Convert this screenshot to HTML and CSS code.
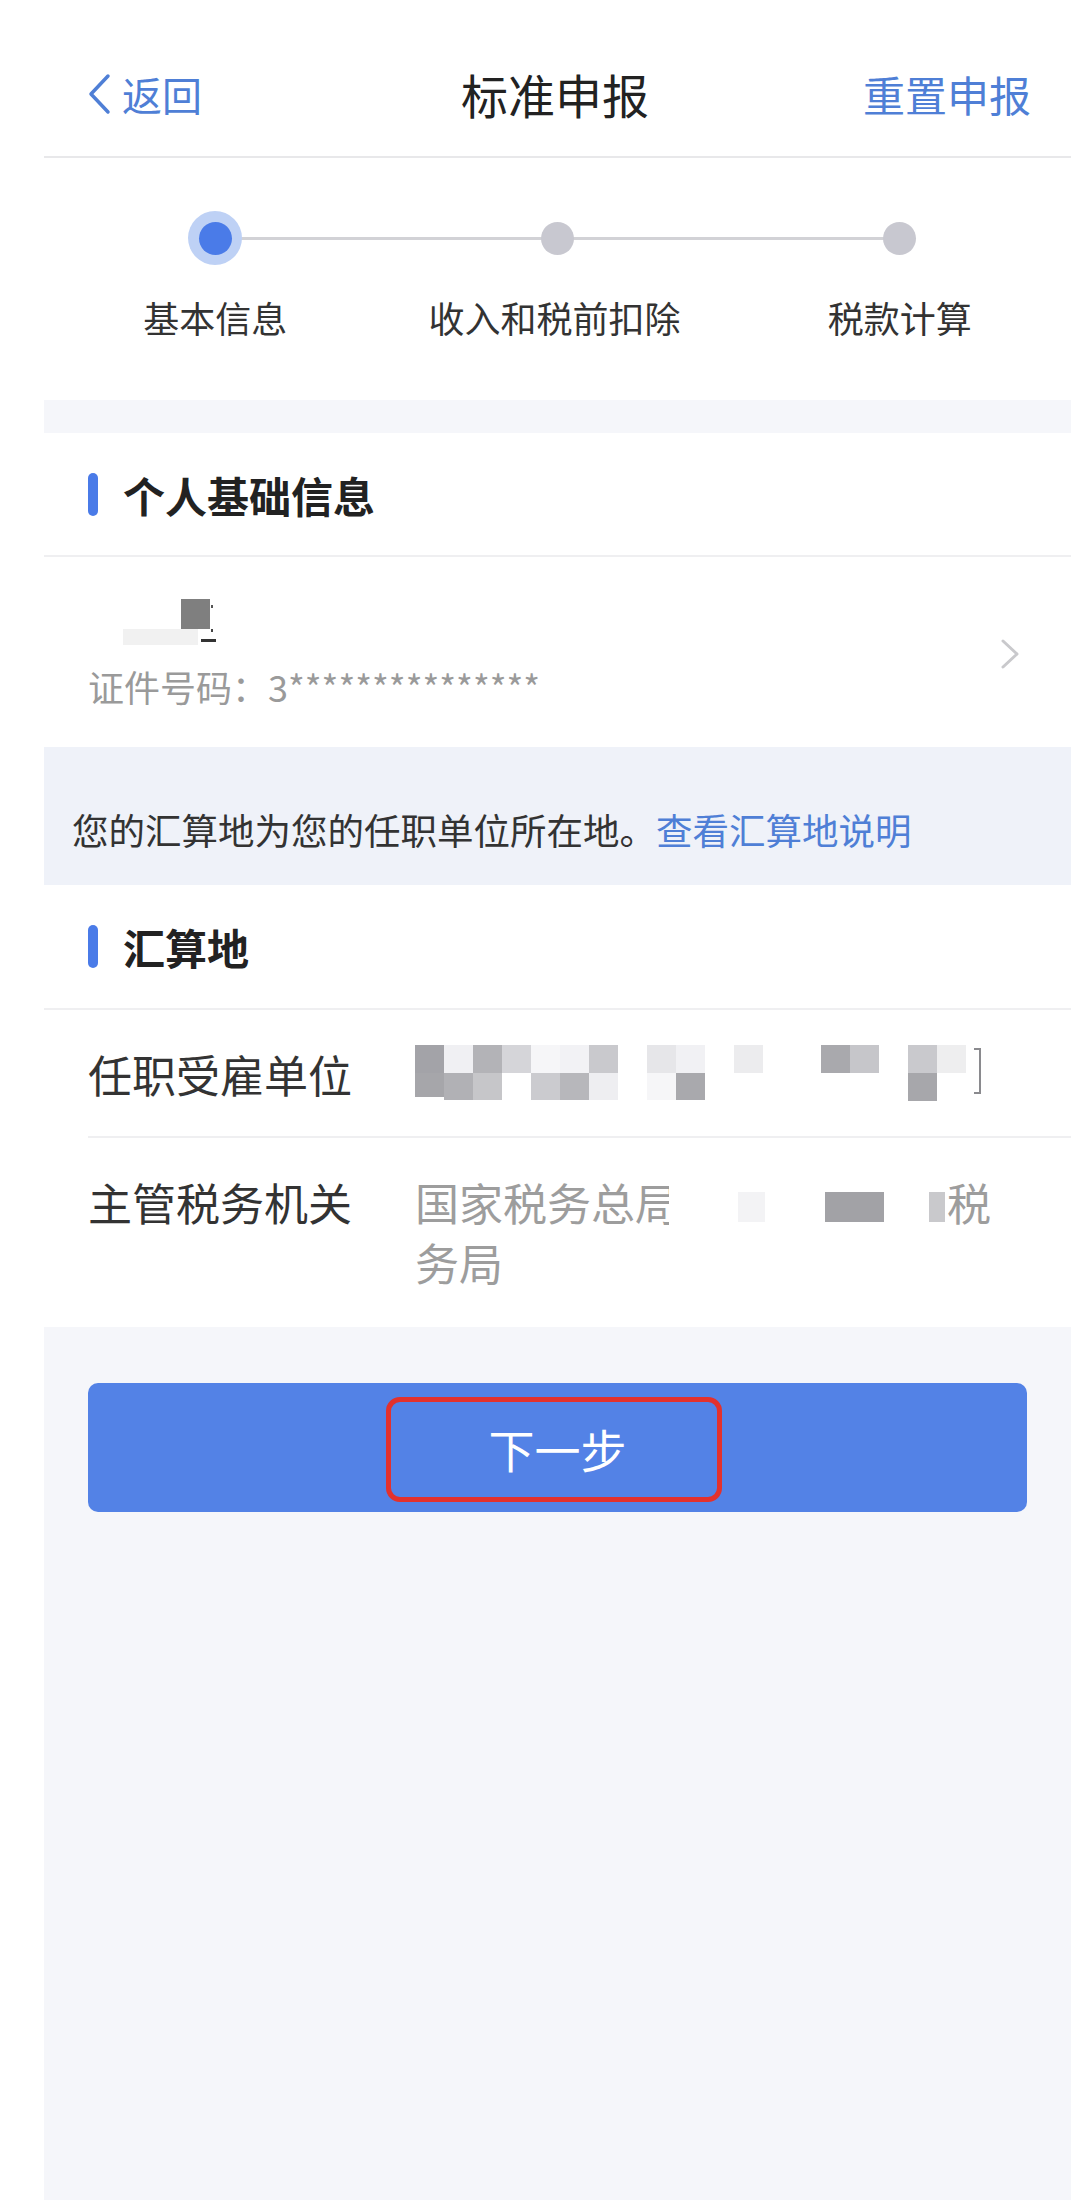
FILE: index.html
```html
<!DOCTYPE html>
<html lang="zh-CN">
<head>
<meta charset="utf-8">
<title>标准申报</title>
<link rel="stylesheet" href="styles.css">
</head>
<body>
<div class="app">
  <header class="nav">
    <div class="nav-left">
      <svg class="back-icon" width="24" height="42" viewBox="0 0 24 42"><path d="M21 3 L4 21 L21 39" fill="none" stroke="#4f7fd6" stroke-width="3.5" stroke-linecap="round" stroke-linejoin="round"/></svg>
      <span class="nav-link">返回</span>
    </div>
    <div class="nav-title">标准申报</div>
    <div class="nav-right"><span class="nav-link">重置申报</span></div>
  </header>

  <section class="stepper">
    <div class="step active">
      <div class="dot-wrap"><span class="dot"></span></div>
      <div class="step-label">基本信息</div>
    </div>
    <div class="step">
      <div class="dot-wrap"><span class="dot"></span></div>
      <div class="step-label wide">收入和税前扣除</div>
    </div>
    <div class="step">
      <div class="dot-wrap"><span class="dot"></span></div>
      <div class="step-label">税款计算</div>
    </div>
  </section>

  <div class="gap"></div>

  <section class="card">
    <div class="card-head"><span class="bar"></span><span class="card-title">个人基础信息</span></div>
    <div class="person">
      <div class="person-info">
        <svg class="name-mosaic" width="140" height="48" viewBox="0 0 140 48">
          <rect x="35" y="30" width="75" height="16" fill="#f1f1f1"/>
          <rect x="93" y="0" width="29" height="30" fill="#7f7f7f"/>
          <rect x="123" y="6" width="2" height="3" fill="#555"/>
          <rect x="123" y="30" width="2" height="3" fill="#444"/>
          <rect x="113" y="40" width="15" height="3" fill="#333"/>
        </svg>
        <div class="id-line">证件号码：3***************</div>
      </div>
      <svg class="chev" width="20" height="30" viewBox="0 0 20 30"><path d="M3 2 L17 15 L3 28" fill="none" stroke="#c9c9cc" stroke-width="3" stroke-linecap="round" stroke-linejoin="round"/></svg>
    </div>
  </section>

  <div class="notice">您的汇算地为您的任职单位所在地。<span class="link">查看汇算地说明</span></div>

  <section class="card">
    <div class="card-head tall"><span class="bar"></span><span class="card-title">汇算地</span></div>
    <div class="kv-list">
      <div class="kv">
        <div class="kv-label">任职受雇单位</div>
        <div class="kv-value">
          <svg class="mosaic" width="580" height="60" viewBox="0 0 580 60">
            <g transform="translate(0,1)">
              <rect x="0" y="0" width="29" height="28" fill="#a3a3a8"/>
              <rect x="29" y="0" width="29" height="28" fill="#f0f0f3"/>
              <rect x="58" y="0" width="29" height="28" fill="#b3b3b7"/>
              <rect x="87" y="0" width="29" height="28" fill="#d5d5d9"/>
              <rect x="116" y="0" width="29" height="28" fill="#f6f6f8"/>
              <rect x="145" y="0" width="29" height="28" fill="#f2f2f5"/>
              <rect x="174" y="0" width="29" height="28" fill="#c9c9cd"/>
              <rect x="232" y="0" width="29" height="28" fill="#e6e6e9"/>
              <rect x="261" y="0" width="29" height="28" fill="#f1f1f4"/>
              <rect x="319" y="0" width="29" height="28" fill="#ececee"/>
              <rect x="406" y="0" width="29" height="28" fill="#a9a9ad"/>
              <rect x="435" y="0" width="29" height="28" fill="#c6c6ca"/>
              <rect x="493" y="0" width="29" height="28" fill="#c9c9cd"/>
              <rect x="522" y="0" width="29" height="28" fill="#eeeeef"/>
              <rect x="0" y="28" width="29" height="24" fill="#a6a6aa"/>
              <rect x="29" y="28" width="29" height="27" fill="#b1b1b5"/>
              <rect x="58" y="28" width="29" height="27" fill="#c6c6c9"/>
              <rect x="116" y="28" width="29" height="27" fill="#cbcbcf"/>
              <rect x="145" y="28" width="29" height="27" fill="#b7b7bb"/>
              <rect x="174" y="28" width="29" height="27" fill="#eeeef1"/>
              <rect x="232" y="28" width="29" height="27" fill="#f6f6f8"/>
              <rect x="261" y="28" width="29" height="27" fill="#a9a9ad"/>
              <rect x="493" y="28" width="29" height="28" fill="#a7a7ab"/>
              <path d="M559 4 H565 V48 H559" fill="none" stroke="#8a8a8e" stroke-width="2"/>
            </g>
          </svg>
        </div>
      </div>
      <div class="kv">
        <div class="kv-label">主管税务机关</div>
        <div class="kv-value">国家税务总局<svg class="mosaic-inline" width="278" height="60" viewBox="0 0 278 60"><rect x="0" y="14" width="22" height="40" fill="#ffffff"/><rect x="69" y="20" width="27" height="30" fill="#f3f3f5"/><rect x="156" y="20" width="59" height="30" fill="#a2a2a6"/><rect x="260" y="20" width="16" height="30" fill="#c9c9cc"/></svg>税<br>务局</div>
      </div>
    </div>
  </section>

  <div class="actions">
    <button class="btn-next" type="button">下一步<span class="mark"></span></button>
  </div>
</div>
</body>
</html>
```

FILE: styles.css
```css
* { box-sizing: border-box; }

html, body {
  margin: 0;
  padding: 0;
  background: #ffffff;
}

body {
  font-family: "Noto Sans CJK SC", "Noto Sans", sans-serif;
  color: #333333;
}

.app {
  margin-left: 44px;
  width: 1027px;
  min-height: 2200px;
  background: #f5f6fa;
}

/* Header */
.nav {
  display: grid;
  grid-template-columns: 1fr auto 1fr;
  align-items: center;
  height: 158px;
  padding: 32px 40px 0 43px;
  background: #ffffff;
  border-bottom: 2px solid #e8e8ea;
}

.nav-left {
  display: flex;
  align-items: center;
  gap: 11px;
}

.back-icon { display: block; }

.nav-link {
  font-size: 40px;
  line-height: 56px;
  color: #4f7fd6;
}

.nav-title {
  font-size: 47px;
  line-height: 56px;
  color: #222222;
  margin-right: 8px;
}

.nav-right {
  display: flex;
  justify-content: flex-end;
}

.nav-right .nav-link { font-size: 42px; }

/* Stepper */
.stepper {
  display: grid;
  grid-template-columns: repeat(3, 1fr);
  background: #ffffff;
  padding: 53px 0 61px;
}

.step {
  position: relative;
  display: flex;
  flex-direction: column;
  align-items: center;
}

.step:not(:last-child)::after {
  content: "";
  position: absolute;
  top: 26px;
  left: 50%;
  width: 100%;
  height: 3px;
  background: #d2d2d6;
  z-index: 0;
}

.dot-wrap {
  position: relative;
  z-index: 1;
  width: 54px;
  height: 54px;
  display: flex;
  align-items: center;
  justify-content: center;
  border-radius: 50%;
}

.dot {
  width: 33px;
  height: 33px;
  border-radius: 50%;
  background: #c8c8d0;
}

.step.active .dot-wrap { background: #bed1f5; }
.step.active .dot { background: #4a7be8; }

.step-label {
  margin-top: 30px;
  font-size: 36px;
  line-height: 44px;
  color: #333333;
  white-space: nowrap;
}

.step-label.wide { margin-right: 6px; }

.gap {
  height: 33px;
  background: #f5f6fa;
}

/* Cards */
.card { background: #ffffff; }

.card-head {
  display: flex;
  align-items: center;
  height: 124px;
  padding: 0 44px;
  border-bottom: 2px solid #efeff1;
}

.card-head.tall { height: 125px; }

.bar {
  width: 10px;
  height: 43px;
  border-radius: 5px;
  background: #4a7be8;
  margin-right: 25px;
}

.card-title {
  font-size: 42px;
  font-weight: 700;
  color: #222222;
}

.person {
  display: flex;
  align-items: center;
  justify-content: space-between;
  padding: 42px 51px 39px 44px;
}

.name-mosaic { display: block; }

.id-line {
  margin-top: 17px;
  font-size: 36px;
  line-height: 44px;
  color: #9a9a9a;
}

.chev { display: block; }

.notice {
  background: #eff2f9;
  padding: 61px 20px 33px 28px;
  font-size: 36.5px;
  line-height: 44px;
  color: #333333;
}

.link { color: #4f7fd6; }

.kv-list { padding-left: 44px; }

.kv {
  display: grid;
  grid-template-columns: 327px 1fr;
  padding: 34px 44px 32px 0;
  font-size: 44px;
  line-height: 60px;
}

.kv:not(:last-child) { border-bottom: 2px solid #efeff1; }

.kv:last-child { padding-bottom: 35px; }

.kv-label { color: #333333; }

.kv-value { color: #9d9d9d; }

.mosaic { display: block; }

.mosaic-inline {
  vertical-align: top;
  margin-left: -10px;
}

/* Action */
.actions { padding: 56px 44px 0; }

.btn-next {
  position: relative;
  display: block;
  width: 100%;
  height: 129px;
  border: 0;
  border-radius: 10px;
  background: #5382e6;
  color: #ffffff;
  font-family: "Noto Sans CJK SC", "Noto Sans", sans-serif;
  font-size: 46px;
  padding: 0;
}

.mark {
  position: absolute;
  left: 298px;
  top: 14px;
  width: 336px;
  height: 105px;
  border: 5px solid #e3312d;
  border-radius: 14px;
}
```
